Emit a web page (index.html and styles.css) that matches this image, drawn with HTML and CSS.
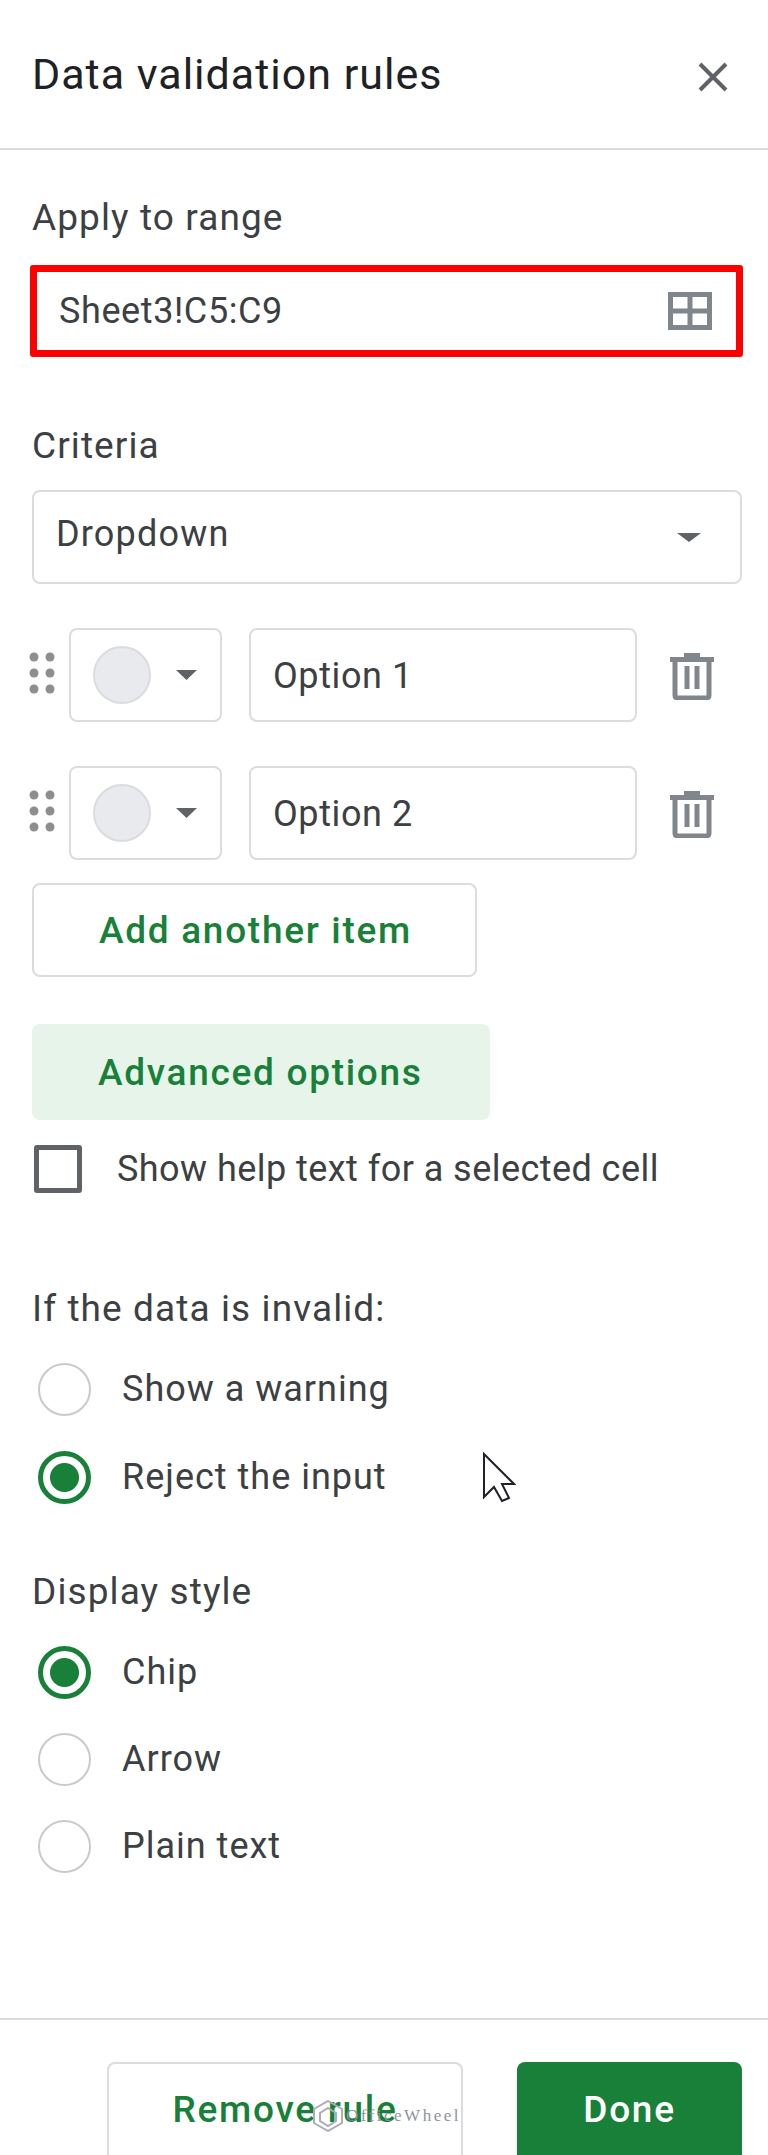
FILE: index.html
```html
<!DOCTYPE html>
<html lang="en">
<head>
    <meta charset="UTF-8">
    <title>Data validation rules</title>
    <link rel="stylesheet" href="styles.css">
</head>
<body>
<div class="panel">
    <div class="head">
        <h1 class="title">Data validation rules</h1>
        <svg class="close" width="30" height="30" viewBox="0 0 30 30"><path d="M2 2L28 28M28 2L2 28" stroke="#5f6368" stroke-width="4" fill="none"/></svg>
    </div>

    <div class="body">
        <div class="label">Apply to range</div>
        <div class="range">
            <span>Sheet3!C5:C9</span>
            <svg width="44" height="38" viewBox="0 0 44 38"><path d="M2.5 2.5H41.5V35.5H2.5ZM22 2.5V35.5M2.5 19H41.5" stroke="#80868b" stroke-width="5" fill="none"/></svg>
        </div>

        <div class="label criteria-label">Criteria</div>
        <div class="box select">
            <span>Dropdown</span>
            <svg width="24" height="9" viewBox="0 0 24 9"><path d="M0 0H24L12 9Z" fill="#5f6368"/></svg>
        </div>

        <div class="item">
            <svg class="dots" width="28" height="44" viewBox="0 0 28 44"><g fill="#8e8e8e"><circle cx="5" cy="5" r="4.5"/><circle cx="21" cy="5" r="4.5"/><circle cx="5" cy="21" r="4.5"/><circle cx="21" cy="21" r="4.5"/><circle cx="5" cy="37" r="4.5"/><circle cx="21" cy="37" r="4.5"/></g></svg>
            <div class="box swatch">
                <span class="circle"></span>
                <svg width="21" height="10" viewBox="0 0 21 10"><path d="M0 0H21L10.500 10Z" fill="#5f6368"/></svg>
            </div>
            <div class="box option">Option 1</div>
            <svg class="trash" width="44" height="48" viewBox="0 0 44 48"><path d="M0 5H44V10H0ZM14 1H30V5H14Z" fill="#80868b"/><path d="M5 10V43Q5 46 8 46H36Q39 46 39 43V10" stroke="#80868b" stroke-width="5" fill="none"/><path d="M17 14V37M27 14V37" stroke="#80868b" stroke-width="5" fill="none"/></svg>
        </div>
        <div class="item">
            <svg class="dots" width="28" height="44" viewBox="0 0 28 44"><g fill="#8e8e8e"><circle cx="5" cy="5" r="4.5"/><circle cx="21" cy="5" r="4.5"/><circle cx="5" cy="21" r="4.5"/><circle cx="21" cy="21" r="4.5"/><circle cx="5" cy="37" r="4.5"/><circle cx="21" cy="37" r="4.5"/></g></svg>
            <div class="box swatch">
                <span class="circle"></span>
                <svg width="21" height="10" viewBox="0 0 21 10"><path d="M0 0H21L10.500 10Z" fill="#5f6368"/></svg>
            </div>
            <div class="box option">Option 2</div>
            <svg class="trash" width="44" height="48" viewBox="0 0 44 48"><path d="M0 5H44V10H0ZM14 1H30V5H14Z" fill="#80868b"/><path d="M5 10V43Q5 46 8 46H36Q39 46 39 43V10" stroke="#80868b" stroke-width="5" fill="none"/><path d="M17 14V37M27 14V37" stroke="#80868b" stroke-width="5" fill="none"/></svg>
        </div>

        <div class="box btn add">Add another item</div>
        <div class="btn advanced">Advanced options</div>

        <div class="check-row">
            <span class="check"></span>
            <span class="text help">Show help text for a selected cell</span>
        </div>

        <div class="label invalid-label">If the data is invalid:</div>
        <div class="radio-row warn"><span class="radio"></span><span class="text">Show a warning</span></div>
        <div class="radio-row"><span class="radio on"></span><span class="text">Reject the input</span></div>

        <div class="label style-label">Display style</div>
        <div class="radio-row chip"><span class="radio on"></span><span class="text">Chip</span></div>
        <div class="radio-row tight"><span class="radio"></span><span class="text">Arrow</span></div>
        <div class="radio-row tight"><span class="radio"></span><span class="text">Plain text</span></div>
    </div>

    <div class="foot">
        <div class="btn remove">Remove rule</div>
        <div class="btn done">Done</div>
    </div>

    <svg class="cursor" width="34" height="52" viewBox="0 0 34 52"><path d="M2 2V45L12 35L20 49L27 46L20 32H32Z" fill="#fff" stroke="#20202c" stroke-width="2"/></svg>
    <div class="mark">
        <svg width="30" height="32" viewBox="0 0 30 32"><path d="M15 1L29 9V23L15 31L1 23V9ZM15 8L23 13V21L15 26L7 21V13Z" fill="none" stroke="#a9adb8" stroke-width="2"/></svg>
        <span>OfficeWheel</span>
    </div>
</div>
</body>
</html>
```

FILE: styles.css
```css
*{
    margin: 0;
    padding: 0;
    box-sizing: border-box;
}
html,body{
    width: 768px;
    height: 2155px;
    overflow: hidden;
    background-color: #fff;
}
body{
    font-family: Roboto, "Liberation Sans", sans-serif;
    color: #3c4043;
}
.panel{
    position: relative;
    height: 2155px;
    overflow: hidden;
}
.head{
    height: 150px;
    padding: 0 40px 0 32px;
    border-bottom: 2px solid #dadce0;
    display: flex;
    align-items: center;
    justify-content: space-between;
}
.title{
    font-size: 43px;
    font-weight: 400;
    letter-spacing: 1px;
    color: #202124;
}
.close{
    margin-top: 6px;
}
.body{
    height: 1868px;
    padding: 48px 27px 0 32px;
}
.label{
    font-size: 37px;
    line-height: 40px;
    letter-spacing: 1.1px;
}
.range{
    width: 713px;
    height: 92px;
    margin: 27px 0 0 -2px;
    padding: 0 24px 0 22px;
    border: 7px solid #ff0000;
    border-radius: 3px;
    display: flex;
    align-items: center;
    justify-content: space-between;
    font-size: 36px;
    letter-spacing: 0.6px;
}
.criteria-label{
    margin-top: 69px;
}
.box{
    border: 2px solid #dadce0;
    border-radius: 8px;
    font-size: 36px;
    letter-spacing: 0.6px;
}
.select{
    width: 710px;
    height: 94px;
    margin-top: 24px;
    padding: 0 39px 0 22px;
    display: flex;
    align-items: center;
    justify-content: space-between;
    letter-spacing: 1.2px;
}
.select span{
    padding-bottom: 6px;
}
.item{
    height: 94px;
    margin: 44px 0 0 -3px;
    display: flex;
    align-items: center;
}
.dots{
    margin: -2px 12px 0 0;
}
.swatch{
    width: 153px;
    height: 94px;
    padding-left: 22px;
    margin-right: 27px;
    display: flex;
    align-items: center;
    gap: 25px;
}
.circle{
    width: 58px;
    height: 58px;
    border-radius: 50%;
    background-color: #e8eaed;
    border: 2px solid #dadce0;
}
.option{
    width: 388px;
    height: 94px;
    line-height: 92px;
    padding-left: 22px;
    margin-right: 33px;
}
.trash{
    margin-top: 2px;
}
.btn{
    font-size: 37px;
    font-weight: 500;
    letter-spacing: 1.7px;
    color: #188038;
    display: flex;
    align-items: center;
}
.add{
    width: 445px;
    height: 94px;
    margin-top: 23px;
    padding-left: 65px;
    font-size: 37px;
    letter-spacing: 1.7px;
}
.advanced{
    width: 458px;
    height: 96px;
    margin-top: 47px;
    padding-left: 66px;
    border-radius: 8px;
    background-color: #e6f4ea;
}
.check-row{
    height: 48px;
    margin-top: 25px;
    padding-left: 2px;
    display: flex;
    align-items: center;
}
.check{
    width: 48px;
    height: 48px;
    border: 5px solid #5f6368;
    border-radius: 3px;
    margin-right: 35px;
}
.text{
    font-size: 36px;
    letter-spacing: 1px;
    padding-bottom: 1px;
}
.text.help{
    letter-spacing: 0.45px;
}
.invalid-label{
    margin-top: 96px;
}
.radio-row{
    height: 54px;
    margin-top: 34px;
    padding-left: 6px;
    display: flex;
    align-items: center;
}
.warn{
    margin-top: 33px;
}
.tight{
    margin-top: 33px;
}
.radio{
    width: 53px;
    height: 53px;
    border: 2px solid #c8cacc;
    border-radius: 50%;
    margin-right: 31px;
    flex: none;
}
.radio.on{
    border: 5px solid #188038;
    background: radial-gradient(circle, #188038 0 14px, #fff 15px);
}
.style-label{
    margin-top: 68px;
}
.chip{
    margin-top: 33px;
}
.foot{
    border-top: 2px solid #dadce0;
    padding: 42px 26px 0 107px;
    display: flex;
    gap: 54px;
}
.remove,.done{
    height: 100px;
    border-radius: 8px;
    justify-content: center;
    padding-bottom: 6px;
}
.remove{
    width: 356px;
    border: 2px solid #dadce0;
}
.done{
    width: 225px;
    background-color: #188038;
    color: #fff;
}
.cursor{
    position: absolute;
    left: 482px;
    top: 1452px;
}
.mark{
    position: absolute;
    left: 313px;
    top: 2100px;
    display: flex;
    align-items: center;
    gap: 3px;
    font-family: "Liberation Serif", serif;
    font-size: 17px;
    letter-spacing: 2.5px;
    color: #8f939f;
}
```
